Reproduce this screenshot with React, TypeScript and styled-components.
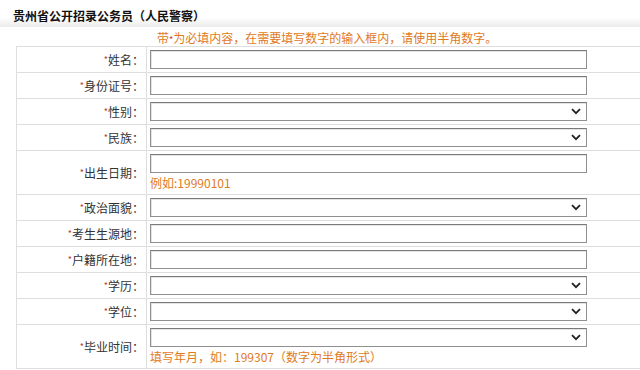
import { FC, Fragment } from "react";
import styled, { createGlobalStyle } from "styled-components";

const GlobalStyle = createGlobalStyle`
  html, body {
    margin: 0;
    padding: 0;
    background: #fff;
    overflow: hidden;
  }
  body {
    font-family: "Noto Sans CJK SC", "Liberation Sans", sans-serif;
    font-size: 12px;
    color: #333;
  }
`;

const Page = styled.div`
  width: 640px;
  height: 370px;
  overflow: hidden;
`;

const Header = styled.div`
  height: 27px;
  padding-left: 13px;
  display: flex;
  align-items: center;
  background: linear-gradient(to bottom, #fff 0%, #fff 65%, #ebebeb 100%);
`;

const Title = styled.h2`
  margin: 0;
  font-size: 12px;
  line-height: 14px;
  font-weight: bold;
  color: #111;
  padding-top: 4px;
`;

const Note = styled.div`
  height: 19px;
  padding-left: 157px;
  display: flex;
  align-items: flex-end;
  font-size: 12px;
  line-height: 16px;
  color: #e07a1e;
  white-space: nowrap;
`;

const Star = styled.span`
  color: #b5402a;
  font-size: 9px;
  vertical-align: top;
  line-height: 12px;
`;

const Form = styled.div`
  margin-left: 16px;
  width: 640px;
  display: grid;
  grid-template-columns: 130px 1fr;
  border-top: 1px solid #dedede;
  border-left: 1px solid #dedede;
`;

const LabelCell = styled.div`
  border-right: 1px solid #dedede;
  border-bottom: 1px solid #dedede;
  display: flex;
  align-items: center;
  justify-content: flex-end;
  padding-right: 2px;
  font-size: 12px;
  color: #333;
  white-space: nowrap;
`;

const FieldCell = styled.div`
  border-bottom: 1px solid #dedede;
  padding: 3px 0 3px 3px;
  display: flex;
  flex-direction: column;
`;

const TextInput = styled.input`
  box-sizing: border-box;
  width: 437px;
  height: 19px;
  margin: 0;
  border: 1px solid #8f8f8f;
  border-top-color: #7a7a7a;
  box-shadow: inset 1px 1px 0 #e4e4e4;
  background: #fff;
  outline: none;
`;

const SelectWrap = styled.div`
  position: relative;
  width: 437px;
  height: 19px;
`;

const Select = styled.select`
  appearance: none;
  box-sizing: border-box;
  width: 437px;
  height: 19px;
  margin: 0;
  border: 1px solid #8f8f8f;
  border-top-color: #7a7a7a;
  border-radius: 0;
  box-shadow: inset 1px 1px 0 #e4e4e4;
  background: #fff;
  outline: none;
`;

const Chevron = styled.svg`
  position: absolute;
  right: 6px;
  top: 6px;
  width: 10px;
  height: 7px;
  pointer-events: none;
`;

const Hint = styled.div`
  margin-top: 2px;
  font-size: 12px;
  line-height: 16px;
  color: #e07a1e;
  white-space: nowrap;
`;

type Field = {
  label: string;
  kind: "text" | "select";
  hint?: string;
};

const fields: Field[] = [
  { label: "姓名：", kind: "text" },
  { label: "身份证号：", kind: "text" },
  { label: "性别：", kind: "select" },
  { label: "民族：", kind: "select" },
  { label: "出生日期：", kind: "text", hint: "例如:19990101" },
  { label: "政治面貌：", kind: "select" },
  { label: "考生生源地：", kind: "text" },
  { label: "户籍所在地：", kind: "text" },
  { label: "学历：", kind: "select" },
  { label: "学位：", kind: "select" },
  { label: "毕业时间：", kind: "select", hint: "填写年月，如：199307（数字为半角形式）" },
];

const Dropdown: FC = () => (
  <SelectWrap>
    <Select defaultValue="">
      <option value=""></option>
    </Select>
    <Chevron viewBox="0 0 10 7">
      <path d="M1 1.2 L5 5.2 L9 1.2" fill="none" stroke="#222" strokeWidth="1.8" />
    </Chevron>
  </SelectWrap>
);

export default function App() {
  return (
    <Page>
      <GlobalStyle />
      <Header>
        <Title>贵州省公开招录公务员（人民警察）</Title>
      </Header>
      <Note>
        带<Star>*</Star>为必填内容，在需要填写数字的输入框内，请使用半角数字。
      </Note>
      <Form>
        {fields.map((f) => (
          <Fragment key={f.label}>
            <LabelCell>
              <Star>*</Star>
              {f.label}
            </LabelCell>
            <FieldCell>
              {f.kind === "text" ? <TextInput type="text" /> : <Dropdown />}
              {f.hint && <Hint>{f.hint}</Hint>}
            </FieldCell>
          </Fragment>
        ))}
      </Form>
    </Page>
  );
}
